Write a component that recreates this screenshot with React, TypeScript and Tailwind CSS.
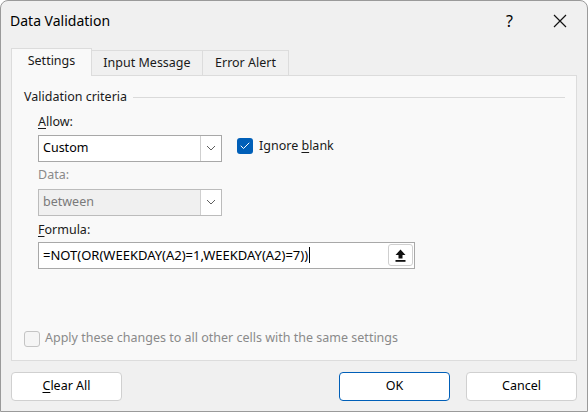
import { Check } from "lucide-react";

const font = { fontFamily: '"Segoe UI", "Noto Sans", "Open Sans", sans-serif' };

const Chevron = () => (
  <svg width="10" height="6" viewBox="0 0 10 6" fill="none">
    <path d="M1 1l4 4 4-4" stroke="#5f5f5f" strokeWidth="1" />
  </svg>
);

type SelectProps = { value: string; disabled?: boolean };

const Select = ({ value, disabled }: SelectProps) => (
  <div
    className={
      "flex h-[27px] w-[184px] items-center border " +
      (disabled ? "border-[#bcbcbc] bg-[#f0f0f0]" : "border-[#a8a8a8] bg-white")
    }
  >
    <span className={"flex-1 pl-[4px] " + (disabled ? "text-[#7a7a7a]" : "text-black")}>
      {value}
    </span>
    <div className="flex h-full w-[21px] items-center justify-center border-l border-[#cfcfcf] bg-white">
      <Chevron />
    </div>
  </div>
);

const App = () => {
  return (
    <div
      className="flex h-[412px] w-[588px] flex-col overflow-hidden rounded-t-[8px] border border-[#9a9a9a] bg-[#f0f0f0] text-[12.5px] text-[#1a1a1a]"
      style={font}
    >
      {/* title bar */}
      <div className="flex h-[39px] shrink-0 items-center pl-[9px]">
        <span className="text-[14px] text-black">Data Validation</span>
        <span className="ml-auto mr-[40px] text-[16px] text-black">?</span>
        <svg className="mr-[20px]" width="14" height="14" viewBox="0 0 14 14">
          <path d="M1 1l12 12M13 1L1 13" stroke="#111" strokeWidth="1.2" />
        </svg>
      </div>

      {/* tabs */}
      <div className="mt-[7px] flex h-[28px] shrink-0 items-end pl-[10px]">
        <div className="relative z-10 -mb-px flex h-[28px] w-[81px] items-center justify-center border border-b-0 border-[#dcdcdc] bg-[#f9f9f9] pb-[2px]">
          Settings
        </div>
        <div className="flex h-[25px] w-[111px] items-center justify-center border border-b-0 border-l-0 border-[#dcdcdc]">
          Input Message
        </div>
        <div className="flex h-[25px] w-[86px] items-center justify-center border border-b-0 border-l-0 border-[#dcdcdc]">
          Error Alert
        </div>
      </div>

      {/* panel */}
      <div className="mx-[10px] flex h-[286px] shrink-0 flex-col border border-[#dcdcdc] bg-[#f9f9f9] pl-[12px] pr-[11px]">
        <div className="mt-[12px] flex items-center gap-[6px]">
          <span>Validation criteria</span>
          <div className="h-px flex-1 bg-[#dadada]" />
        </div>

        <div className="pl-[14px]">
          <div className="mt-[6px] leading-[18px]">
            <span className="underline underline-offset-2">A</span>llow:
          </div>
          <div className="mt-[4px] flex items-start">
            <Select value="Custom" />
            <div className="ml-[15px] mt-[2px] flex items-center gap-[6px]">
              <div className="flex h-[16px] w-[16px] items-center justify-center rounded-[3px] bg-[#005fb8]">
                <Check size={12} color="white" strokeWidth={2} />
              </div>
              <span>
                Ignore <span className="underline underline-offset-2">b</span>lank
              </span>
            </div>
          </div>

          <div className="mt-[4px] leading-[18px] text-[#8a8a8a]">Data:</div>
          <div className="mt-[5px]">
            <Select value="between" disabled />
          </div>

          <div className="mt-[5px] leading-[18px]">
            <span className="underline underline-offset-2">F</span>ormula:
          </div>
          <div className="mt-[3px] flex h-[27px] w-[377px] items-center border border-[#a8a8a8] bg-white pl-[4px] pr-[1px]">
            <span className="text-[13px] text-black">=NOT(OR(WEEKDAY(A2)=1,WEEKDAY(A2)=7))</span>
            <div className="ml-px h-[16px] w-px bg-black" />
            <div className="ml-auto flex h-[22px] w-[25px] items-center justify-center rounded-[3px] border border-[#cfcfcf] bg-white">
              <svg width="11" height="13" viewBox="0 0 11 13">
                <path d="M5.5 0.5L10.5 6H7.5V9.5H3.5V6H0.5Z" fill="#111" />
                <rect x="0.5" y="11" width="10" height="1.8" fill="#111" />
              </svg>
            </div>
          </div>
        </div>

        <div className="mt-auto mb-[12px] flex items-center gap-[5px] text-[#8a8a8a]">
          <div className="h-[16px] w-[16px] rounded-[3px] border border-[#c4c4c4] bg-[#f5f5f5]" />
          <span>Apply these changes to all other cells with the same settings</span>
        </div>
      </div>

      {/* buttons */}
      <div className="mt-[11px] flex px-[10px]">
        <button className="h-[29px] w-[111px] rounded-[4px] border border-[#d0d0d0] bg-white text-black">
          <span className="underline underline-offset-2">C</span>lear All
        </button>
        <button className="ml-auto h-[29px] w-[111px] rounded-[4px] border border-[#005fb8] bg-white text-black">
          OK
        </button>
        <button className="ml-[16px] h-[29px] w-[111px] rounded-[4px] border border-[#d0d0d0] bg-white text-black">
          Cancel
        </button>
      </div>
    </div>
  );
};

export default App;
